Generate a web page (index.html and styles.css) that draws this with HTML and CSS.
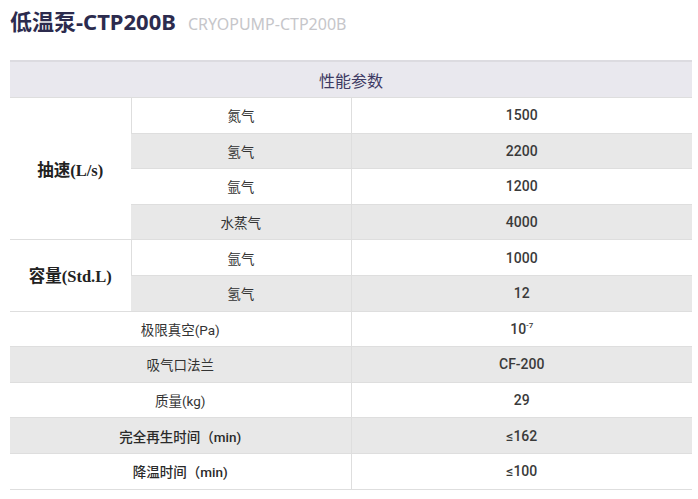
FILE: index.html
```html
<!DOCTYPE html>
<html lang="zh">
<head>
<meta charset="utf-8">
<title>低温泵-CTP200B</title>
<link rel="stylesheet" href="styles.css">
</head>
<body>
<div class="page">
  <h1 class="title"><span class="title-main">低温泵-CTP200B</span><span class="title-sub">CRYOPUMP-CTP200B</span></h1>
  <table class="spec">
    <colgroup><col class="c1"><col class="c2"><col class="c3"></colgroup>
    <thead>
      <tr><th colspan="3" class="head">性能参数</th></tr>
    </thead>
    <tbody>
      <tr><td rowspan="4" class="group">抽速(L/s)</td><td>氮气</td><td class="num">1500</td></tr>
      <tr class="alt"><td>氢气</td><td class="num">2200</td></tr>
      <tr><td>氩气</td><td class="num">1200</td></tr>
      <tr class="alt"><td>水蒸气</td><td class="num">4000</td></tr>
      <tr class="sep"><td rowspan="2" class="group">容量(Std.L)</td><td>氩气</td><td class="num">1000</td></tr>
      <tr class="alt"><td>氢气</td><td class="num">12</td></tr>
      <tr class="sep"><td colspan="2">极限真空(Pa)</td><td class="num">10<sup>-7</sup></td></tr>
      <tr class="alt"><td colspan="2">吸气口法兰</td><td class="num">CF-200</td></tr>
      <tr><td colspan="2">质量(kg)</td><td class="num">29</td></tr>
      <tr class="alt"><td colspan="2" class="strong">完全再生时间（min)</td><td class="num">≤162</td></tr>
      <tr><td colspan="2" class="strong">降温时间（min)</td><td class="num">≤100</td></tr>
    </tbody>
  </table>
</div>
</body>
</html>
```

FILE: styles.css
```css
html, body {
  margin: 0;
  padding: 0;
  background: #ffffff;
}
.page {
  padding: 8px 6px 0 10px;
}
.title {
  margin: 0;
  height: 52px;
  display: flex;
  align-items: baseline;
  gap: 12px;
  font-family: "Noto Sans", "Noto Sans CJK SC", sans-serif;
  line-height: 26px;
}
.title-main {
  font-size: 22px;
  font-weight: 700;
  color: #2c2b4e;
}
.title-sub {
  font-size: 16px;
  font-weight: 400;
  color: #c6c6ca;
}
.spec {
  width: 682px;
  border-collapse: collapse;
  table-layout: fixed;
  font-family: "Roboto", "Noto Sans CJK SC", sans-serif;
  font-size: 13.5px;
  color: #333333;
}
.c1 { width: 121px; }
.c2 { width: 220px; }
.c3 { width: 341px; }
.spec th, .spec td {
  border: 1px solid #dedede;
  border-left: none;
  border-right: none;
  text-align: center;
  padding: 0;
  height: 34.6px;
}
.spec td + td {
  border-left: 1px solid #dedede;
}
.spec .head {
  height: 35px;
  background: #e9e8ee;
  border-top: 2px solid #dcdbe0;
  font-family: "Noto Sans CJK SC", sans-serif;
  font-weight: 400;
  font-size: 16px;
  color: #3d3a63;
}
.spec .alt td {
  background: #e8e8e8;
}
.spec td.num {
  font-size: 14px;
  font-weight: 500;
  color: #3a3a3a;
}
.spec td.strong {
  font-weight: 500;
  color: #2a2a2a;
}
.spec td.group {
  background: #ffffff;
  font-family: "Liberation Serif", "Noto Sans CJK SC", serif;
  font-weight: 700;
  font-size: 16.5px;
  color: #222222;
}
.spec sup {
  font-size: 8px;
  vertical-align: 6px;
}
```
